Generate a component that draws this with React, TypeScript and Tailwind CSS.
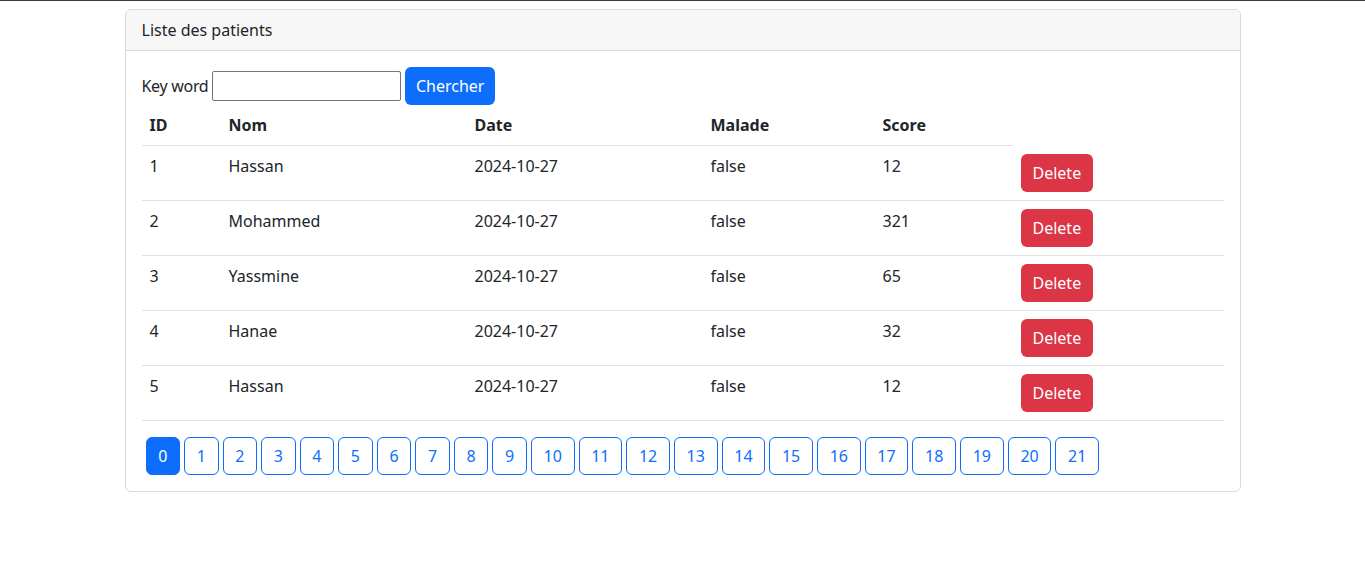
import React from "react";

const patients = [
  { id: 1, nom: "Hassan", date: "2024-10-27", malade: false, score: 12 },
  { id: 2, nom: "Mohammed", date: "2024-10-27", malade: false, score: 321 },
  { id: 3, nom: "Yassmine", date: "2024-10-27", malade: false, score: 65 },
  { id: 4, nom: "Hanae", date: "2024-10-27", malade: false, score: 32 },
  { id: 5, nom: "Hassan", date: "2024-10-27", malade: false, score: 12 },
];

const pages = Array.from({ length: 22 }, (_, i) => i);

export default function App() {
  return (
    <div className="min-h-screen bg-white text-[16px] leading-6 text-[#212529] font-['Noto_Sans',sans-serif]">
      <div className="h-px bg-[#343a40]" />
      <div className="mx-auto w-[1140px] px-3 pt-[8px]">
        <div className="rounded-md border border-[#d9d9d9] overflow-hidden">
          <div className="border-b border-[#d9d9d9] bg-[#f7f7f7] px-4 py-2">
            Liste des patients
          </div>
          <div className="p-4">
            {/* formulaire de recherche */}
            <form className="flex items-center h-[38px]" onSubmit={(e) => e.preventDefault()}>
              <label className="tracking-[-0.3px]">Key word</label>
              <input
                type="text"
                className="ml-1 h-[30px] w-[189px] border border-[#767676] rounded-[2px] px-1 outline-none"
              />
              <button
                type="submit"
                className="ml-1 h-[38px] rounded-md bg-[#0d6efd] px-[10.5px] text-white"
              >
                Chercher
              </button>
            </form>

            <table className="w-full border-collapse text-left">
              <colgroup>
                <col className="w-[79px]" />
                <col className="w-[246px]" />
                <col className="w-[236px]" />
                <col className="w-[172px]" />
                <col className="w-[138px]" />
                <col />
              </colgroup>
              <thead>
                <tr>
                  {["ID", "Nom", "Date", "Malade", "Score"].map((h) => (
                    <th key={h} className="border-b border-[#dee2e6] p-2 font-bold align-top">
                      {h}
                    </th>
                  ))}
                </tr>
              </thead>
              <tbody>
                {patients.map((p) => (
                  <tr key={p.id}>
                    <td className="border-b border-[#dee2e6] p-2 align-top">{p.id}</td>
                    <td className="border-b border-[#dee2e6] p-2 align-top">{p.nom}</td>
                    <td className="border-b border-[#dee2e6] p-2 align-top">{p.date}</td>
                    <td className="border-b border-[#dee2e6] p-2 align-top">{String(p.malade)}</td>
                    <td className="border-b border-[#dee2e6] p-2 align-top">{p.score}</td>
                    <td className="border-b border-[#dee2e6] p-2 align-top">
                      <button className="h-[38px] rounded-md bg-[#dc3545] px-3 text-white">
                        Delete
                      </button>
                    </td>
                  </tr>
                ))}
              </tbody>
            </table>

            {/* pagination */}
            <ul className="mt-4 flex">
              {pages.map((n) => (
                <li key={n} className="ml-1">
                  <button
                    className={
                      n === 0
                        ? "h-[38px] rounded-md border border-[#0d6efd] bg-[#0d6efd] px-[11.7px] text-white"
                        : "h-[38px] rounded-md border border-[#0d6efd] bg-white px-[11.7px] text-[#0d6efd]"
                    }
                  >
                    {n}
                  </button>
                </li>
              ))}
            </ul>
          </div>
        </div>
      </div>
    </div>
  );
}
